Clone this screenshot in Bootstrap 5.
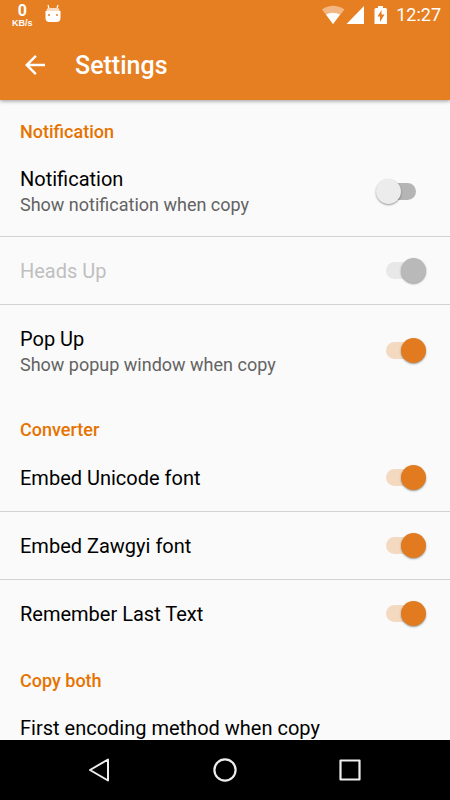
<!DOCTYPE html>
<html lang="en">
<head>
<meta charset="utf-8">
<meta name="viewport" content="width=device-width, initial-scale=1">
<title>Settings</title>
<link href="https://cdn.jsdelivr.net/npm/bootstrap@5.3.0/dist/css/bootstrap.min.css" rel="stylesheet">
<style>
  :root { --accent: #e67e22; --accent-deep: #e27a1f; --page: #fafafa; }
  body { font-family: Roboto, "Liberation Sans", sans-serif; background: var(--page); color: #000; }
  .app-head { background: var(--accent); box-shadow: 0 1px 4px rgba(0, 0, 0, .4); z-index: 1; }
  .status-bar { height: 30px; padding: 0 9px 0 12px; }
  .net-speed { font-weight: 700; text-align: center; padding-top: 3px; }
  .net-speed .rate { font-size: 16px; line-height: 16px; }
  .net-speed .unit { font-family: "Liberation Sans", sans-serif; font-size: 9px; line-height: 9px; }
  .clock { font-size: 18px; line-height: 30px; }
  .toolbar { height: 70px; padding: 2px 20px 0; gap: 25px; }
  .toolbar h1 { font-size: 25px; line-height: 30px; font-weight: 500; }
  .plain-btn { background: none; border: 0; padding: 0; line-height: 0; color: inherit; }
  .section-title { font-size: 18px; line-height: 20px; font-weight: 500; color: #e67300; padding: 24px 20px 4px; margin: 0; }
  .section-title.is-first { padding-top: 22px; }
  .settings-list { --bs-list-group-bg: transparent; --bs-list-group-color: #000; --bs-list-group-border-color: #d2d2d2; }
  .setting { min-height: 68px; padding: 0 24px 0 20px; }
  .setting:last-child { min-height: 67px; }
  .setting.two-line { min-height: 91px; }
  .setting.two-line label { padding-top: 2px; }
  .setting .setting-name { font-size: 20px; line-height: 26px; }
  .setting .setting-note { font-size: 18px; line-height: 26px; color: #636363; }
  .setting.is-off .setting-name { color: #bfbfbf; }
  .toggle { appearance: none; display: grid; width: 50px; height: 25px; margin: 0; flex: none; align-items: center; }
  .toggle::before, .toggle::after { content: ""; grid-area: 1 / 1; }
  .toggle::before { width: 30px; height: 17px; border-radius: 9px; background: #b5b5b5; justify-self: center; }
  .toggle::after { width: 25px; height: 25px; border-radius: 50%; background: #ececec; box-shadow: 0 1px 2px rgba(0, 0, 0, .4); justify-self: start; }
  .toggle:checked::before { background: #f4d9c1; }
  .toggle:checked::after { background: var(--accent-deep); justify-self: end; }
  .toggle:disabled::before { background: #e8e8e8; }
  .toggle:disabled::after { background: #b9b9b9; }
  .nav-keys { height: 60px; background: #000; color: #eee; gap: 101px; }
</style>
<script src="https://cdn.jsdelivr.net/npm/bootstrap@5.3.0/dist/js/bootstrap.bundle.min.js"></script>
</head>
<body class="vh-100 d-flex flex-column overflow-hidden">
<header class="app-head position-relative text-white flex-shrink-0">
  <div class="status-bar d-flex justify-content-between">
    <div class="d-flex align-items-start gap-2">
      <div class="net-speed"><div class="rate">0</div><div class="unit">KB/s</div></div>
      <svg class="ms-1" width="16" height="24" viewBox="0 0 16 24" aria-hidden="true">
        <path d="M3 5l1.200 4M13 5l-1.200 4" stroke="#fff" stroke-width="1.200" fill="none"/>
        <path d="M1.500 11V10q0-2 2.500-2h8q2.500 0 2.500 2v1z" fill="#fbdcc0"/>
        <path d="M.5 11h15v7q0 4-4 4h-7q-4 0-4-4z" fill="#fff"/>
        <circle cx="4" cy="15" r="1" fill="#e67e22"/><circle cx="12" cy="15" r="1" fill="#e67e22"/>
      </svg>
    </div>
    <div class="d-flex align-items-center">
      <svg width="74" height="30" viewBox="322 0 74 30" aria-hidden="true">
        <path d="M322 9.500Q333 2 344.500 9.500L333 24z" fill="#f2b782"/>
        <path d="M326 14.500Q333 11 340 14.500L333 24z" fill="#fff"/>
        <path d="M364 6v18h-17.500z" fill="#fff"/>
        <path d="M378 6h5v2h2.500q1.500 0 1.500 1.500V24h-12.500V9.500q0-1.500 1.500-1.500h2z" fill="#fff"/>
        <path d="M381.500 10l-4 6.500h2.500V22l4.500-7.500H381.500z" fill="#e67e22"/>
      </svg>
      <span class="clock">12:27</span>
    </div>
  </div>
  <div class="toolbar d-flex align-items-center">
    <button class="plain-btn" type="button" aria-label="Back">
      <svg width="30" height="30" viewBox="0 0 24 24" fill="currentColor"><path d="M20 10.200H7.830l5.590-5.590L12 3.200l-8 8 8 8 1.410-1.410L7.830 12.200H20v-2z"/></svg>
    </button>
    <h1 class="m-0">Settings</h1>
  </div>
</header>

<main class="flex-fill overflow-hidden">
  <h2 class="section-title is-first">Notification</h2>
  <div class="settings-list list-group list-group-flush">
    <div class="setting two-line list-group-item d-flex align-items-center">
      <label class="flex-fill d-flex flex-column" for="notify"><span class="setting-name">Notification</span><span class="setting-note">Show notification when copy</span></label>
      <input class="toggle" type="checkbox" role="switch" id="notify">
    </div>
    <div class="setting is-off list-group-item d-flex align-items-center">
      <label class="flex-fill setting-name" for="heads">Heads Up</label>
      <input class="toggle" type="checkbox" role="switch" id="heads" checked disabled>
    </div>
    <div class="setting two-line list-group-item d-flex align-items-center">
      <label class="flex-fill d-flex flex-column" for="popup"><span class="setting-name">Pop Up</span><span class="setting-note">Show popup window when copy</span></label>
      <input class="toggle" type="checkbox" role="switch" id="popup" checked>
    </div>
  </div>
  <h2 class="section-title">Converter</h2>
  <div class="settings-list list-group list-group-flush">
    <div class="setting list-group-item d-flex align-items-center">
      <label class="flex-fill setting-name" for="unicode">Embed Unicode font</label>
      <input class="toggle" type="checkbox" role="switch" id="unicode" checked>
    </div>
    <div class="setting list-group-item d-flex align-items-center">
      <label class="flex-fill setting-name" for="zawgyi">Embed Zawgyi font</label>
      <input class="toggle" type="checkbox" role="switch" id="zawgyi" checked>
    </div>
    <div class="setting list-group-item d-flex align-items-center">
      <label class="flex-fill setting-name" for="remember">Remember Last Text</label>
      <input class="toggle" type="checkbox" role="switch" id="remember" checked>
    </div>
  </div>
  <h2 class="section-title">Copy both</h2>
  <div class="settings-list list-group list-group-flush">
    <button class="setting list-group-item list-group-item-action" type="button"><span class="setting-name">First encoding method when copy</span></button>
  </div>
</main>

<nav class="nav-keys d-flex justify-content-center align-items-center flex-shrink-0" aria-label="System">
  <button class="plain-btn" type="button" aria-label="Back"><svg width="24" height="24" viewBox="0 0 24 24" fill="none" stroke="currentColor" stroke-width="2" stroke-linejoin="round"><path d="M20 1.500v21L2 12z"/></svg></button>
  <button class="plain-btn" type="button" aria-label="Home"><svg width="24" height="24" viewBox="0 0 24 24" fill="none" stroke="currentColor" stroke-width="2.200"><circle cx="12" cy="12" r="10.600"/></svg></button>
  <button class="plain-btn" type="button" aria-label="Recent apps"><svg width="24" height="24" viewBox="0 0 24 24" fill="none" stroke="currentColor" stroke-width="2.200" stroke-linejoin="round"><path d="M2.500 2.500h19v19h-19z"/></svg></button>
</nav>
</body>
</html>
